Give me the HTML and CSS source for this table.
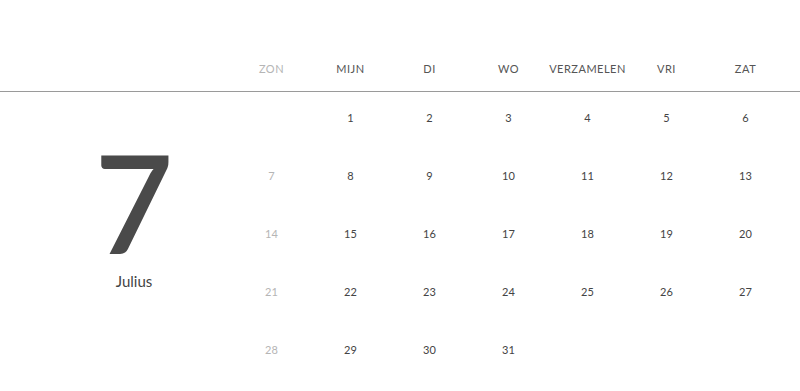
FILE: index.html
```html
<!DOCTYPE html>
<html lang="nl">
<head>
<meta charset="utf-8">
<title>Juli</title>
<link rel="stylesheet" href="styles.css">
</head>
<body>
<div class="calendar">
  <div class="head">
    <div class="head-spacer"></div>
    <div class="weekdays">
      <div class="wd muted">ZON</div>
      <div class="wd">MIJN</div>
      <div class="wd">DI</div>
      <div class="wd">WO</div>
      <div class="wd">VERZAMELEN</div>
      <div class="wd">VRI</div>
      <div class="wd">ZAT</div>
    </div>
  </div>
  <div class="main">
    <div class="month">
      <div class="big">7</div>
      <div class="name">Julius</div>
    </div>
    <div class="days">
      <div class="d"></div><div class="d">1</div><div class="d">2</div><div class="d">3</div><div class="d">4</div><div class="d">5</div><div class="d">6</div>
      <div class="d muted">7</div><div class="d">8</div><div class="d">9</div><div class="d">10</div><div class="d">11</div><div class="d">12</div><div class="d">13</div>
      <div class="d muted">14</div><div class="d">15</div><div class="d">16</div><div class="d">17</div><div class="d">18</div><div class="d">19</div><div class="d">20</div>
      <div class="d muted">21</div><div class="d">22</div><div class="d">23</div><div class="d">24</div><div class="d">25</div><div class="d">26</div><div class="d">27</div>
      <div class="d muted">28</div><div class="d">29</div><div class="d">30</div><div class="d">31</div><div class="d"></div><div class="d"></div><div class="d"></div>
    </div>
  </div>
</div>
</body>
</html>
```

FILE: styles.css
```css
* { box-sizing: border-box; }
body {
  margin: 0;
  background: #fff;
  font-family: Lato, "Open Sans", sans-serif;
  color: #444;
}
.calendar { width: 800px; }
.head {
  display: flex;
  height: 92px;
  border-bottom: 1px solid #9a9a9a;
}
.head-spacer { width: 232px; }
.weekdays {
  display: grid;
  grid-template-columns: repeat(7, 79px);
  align-items: end;
  padding-bottom: 15px;
}
.wd {
  text-align: center;
  font-size: 11px;
  line-height: 14px;
  letter-spacing: 0.5px;
  color: #555;
}
.muted { color: #b5b5b5 !important; }
.main { display: flex; }
.month {
  width: 232px;
  padding-left: 36px;
  display: flex;
  flex-direction: column;
  align-items: center;
  padding-top: 55px;
}
.big {
  font-size: 136px;
  line-height: 110px;
  font-weight: 600;
  color: #4a4a4a;
}
.name {
  font-size: 15px;
  line-height: 18px;
  color: #444;
  margin-top: 15px;
}
.days {
  display: grid;
  grid-template-columns: repeat(7, 79px);
  grid-auto-rows: 58px;
}
.d {
  text-align: center;
  font-size: 11px;
  line-height: 14px;
  padding-top: 19px;
  color: #444;
}
```
